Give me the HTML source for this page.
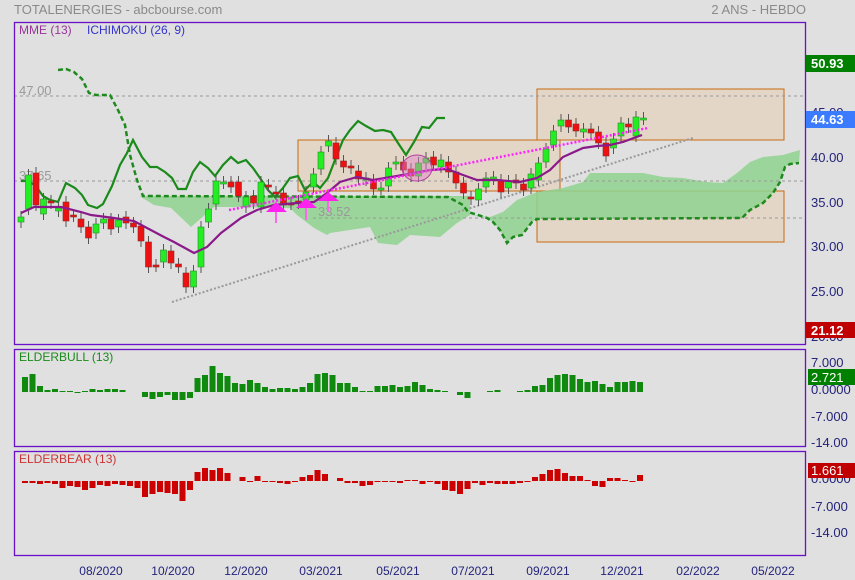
<!DOCTYPE html>
<html><head><meta charset="utf-8"><style>
html,body{margin:0;padding:0;background:#e0e0e0;width:855px;height:580px;overflow:hidden}
svg{display:block;font-family:"Liberation Sans",sans-serif}
</style></head><body>
<svg id="s" width="855" height="580" xmlns="http://www.w3.org/2000/svg">
<rect width="855" height="580" fill="#e0e0e0"/>
<text x="14" y="14" font-size="13" fill="#8a8a8a">TOTALENERGIES - abcbourse.com</text>
<text x="806" y="14" font-size="13" fill="#8a8a8a" text-anchor="end">2 ANS - HEBDO</text>

<rect x="298" y="140" width="262" height="51" fill="#e3d6c6" stroke="#c86a10" stroke-width="1"/>
<rect x="537" y="89" width="247" height="51" fill="#e3d6c6" stroke="#c86a10" stroke-width="1"/>
<rect x="537" y="191" width="247" height="51" fill="#e3d6c6" stroke="#c86a10" stroke-width="1"/>

<polygon fill="#8fd28f" fill-opacity="0.85" points="140,196 470,196 470,215 457,223 440,237 410,235 397,245 378,243 370,227 350,230 330,233 327,235 314,228 297,215 290,208 231,207 214,207 191,227 171,208 154,205 141,197"/>
<polygon fill="#8fd28f" fill-opacity="0.85" points="470,215 490,217 503,212 517,200 537,192 563,188 583,182 590,173 617,173 643,173 663,177 683,178 707,182 723,183 737,173 750,162 763,157 783,155 800,150 799,163 790,164 785,167 780,182 773,193 763,203 750,210 742,218 537,219 532,222 522,235 513,237 507,243 500,230 493,222 487,218 478,215"/>

<line x1="14" y1="96" x2="806" y2="96" stroke="#999" stroke-dasharray="3,3"/>
<line x1="14" y1="181" x2="806" y2="181" stroke="#999" stroke-dasharray="3,3"/>
<line x1="313" y1="218" x2="806" y2="218" stroke="#999" stroke-dasharray="3,3"/>
<text x="19" y="95" font-size="13" fill="#999">47.00</text>
<text x="19" y="180" font-size="13" fill="#999">37.65</text>
<text x="318" y="216" font-size="13" fill="#999">33.52</text>

<line x1="172" y1="302" x2="693" y2="138" stroke="#999" stroke-width="2" stroke-dasharray="2,2"/>

<polyline fill="none" stroke="#1e8a1e" stroke-width="2.5" stroke-dasharray="5,3" points="58,70 66,69 74,72 82,79 89,93 96,95 110,95 118,110 125,125 130,155 137,180 143,196 448,197 463,205 468,212 478,215 487,218 493,222 500,230 507,243 513,237 522,235 532,222 537,219 742,218 750,210 763,203 773,193 780,182 785,167 790,164 799,163"/>
<polyline fill="none" stroke="#1a8a1a" stroke-width="2.2" points="21,181 27,181 35,185 43,196 50,200 58,202 66,183 75,188 82,195 88,205 97,208 103,204 112,186 120,165 127,153 133,140 142,157 150,167 157,167 165,172 172,178 178,189 186,189 193,172 200,162 208,168 215,176 223,165 231,157 238,163 246,160 253,168 260,178 268,190 275,197 283,188 290,178 298,176 305,190 313,182 320,188 328,178 335,160 343,140 350,130 358,121 366,126 375,131 383,130 391,132 398,143 406,155 414,142 422,127 429,128 437,118 445,118"/>

<g id="candles"></g>

<polyline fill="none" stroke="#8a1a8a" stroke-width="2.2" points="21,213 34,207 61,207 81,212 91,215 114,218 134,221 147,228 164,237 174,242 194,253 207,247 221,233 241,218 257,210 274,205 297,203 314,202 327,193 340,182 357,177 373,180 397,176 430,170 447,169 463,175 477,180 497,180 520,182 537,178 550,170 563,157 583,148 597,146 610,145 623,142 642,135"/>
<line x1="229" y1="210" x2="648" y2="128" stroke="#ff22ff" stroke-width="2.5" stroke-dasharray="2,2"/>
<ellipse cx="417" cy="168" rx="15" ry="13" fill="#e080c8" fill-opacity="0.45" stroke="#b040a0"/>

<g fill="#ff22ee">
<rect x="275" y="210" width="2" height="13" fill="#ff66ee"/>
<polygon points="276,202 266,212 287,212"/>
<rect x="305" y="206" width="2" height="14" fill="#ff66ee"/>
<polygon points="306,198 296,208 317,208"/>
<rect x="327" y="199" width="2" height="13" fill="#ff66ee"/>
<polygon points="328,192 318,201 339,201"/>
</g>

<rect x="14.5" y="22.5" width="791" height="322" fill="none" stroke="#6a10c8" stroke-width="1.3"/>
<text x="19" y="34" font-size="12" fill="#993399">MME (13)</text>
<text x="87" y="34" font-size="12" fill="#3333cc">ICHIMOKU (26, 9)</text>

<g font-size="13" fill="#23237a">
<text x="811" y="117">45.00</text>
<text x="811" y="162">40.00</text>
<text x="811" y="207">35.00</text>
<text x="811" y="251">30.00</text>
<text x="811" y="296">25.00</text>
<text x="811" y="341">20.00</text>
</g>
<rect x="806" y="55" width="49" height="17" fill="#008000"/>
<text x="811" y="68" font-size="13" font-weight="bold" fill="#fff">50.93</text>
<rect x="806" y="111" width="49" height="17" fill="#3a7bff"/>
<text x="811" y="124" font-size="13" font-weight="bold" fill="#fff">44.63</text>
<rect x="806" y="322" width="49" height="16" fill="#c00000"/>
<text x="811" y="335" font-size="13" font-weight="bold" fill="#fff">21.12</text>

<g id="bull"></g>
<rect x="14.5" y="349.5" width="791" height="97" fill="none" stroke="#6a10c8" stroke-width="1.3"/>
<text x="19" y="361" font-size="12" fill="#1a8a1a">ELDERBULL (13)</text>
<g font-size="13" fill="#23237a">
<text x="811" y="367">7.000</text>
<text x="811" y="394">0.0000</text>
<text x="811" y="421">-7.000</text>
<text x="811" y="447">-14.00</text>
</g>
<rect x="808" y="369" width="47" height="16" fill="#008000"/>
<text x="811" y="382" font-size="13" fill="#fff">2.721</text>

<g id="bear"></g>
<rect x="14.5" y="451.5" width="791" height="104" fill="none" stroke="#6a10c8" stroke-width="1.3"/>
<text x="19" y="463" font-size="12" fill="#cc3333">ELDERBEAR (13)</text>
<g font-size="13" fill="#23237a">
<text x="811" y="483">0.0000</text>
<text x="811" y="511">-7.000</text>
<text x="811" y="537">-14.00</text>
</g>
<rect x="808" y="463" width="47" height="15" fill="#c00000"/>
<text x="811" y="475" font-size="13" fill="#fff">1.661</text>

<g font-size="12" fill="#23237a" text-anchor="middle">
<text x="101" y="575">08/2020</text>
<text x="173" y="575">10/2020</text>
<text x="246" y="575">12/2020</text>
<text x="321" y="575">03/2021</text>
<text x="398" y="575">05/2021</text>
<text x="473" y="575">07/2021</text>
<text x="548" y="575">09/2021</text>
<text x="622" y="575">12/2021</text>
<text x="698" y="575">02/2022</text>
<text x="773" y="575">05/2022</text>
</g>
</svg>
<script>
var NS="http://www.w3.org/2000/svg";
function el(p,t,a){var e=document.createElementNS(NS,t);for(var k in a)e.setAttribute(k,a[k]);p.appendChild(e);return e;}
var C=[[222,217],[209,175],[173,205],[214,199],[201,203],[211,208],[202,221],[215,216],[219,227],[227,238],[233,224],[223,219],[219,229],[227,220],[217,223],[223,227],[226,241],[242,267],[265,266],[262,250],[251,263],[264,267],[273,287],[287,271],[267,227],[222,209],[204,181],[183,182],[182,187],[182,196],[207,197],[196,203],[207,182],[185,186],[192,194],[193,205],[203,204],[201,203],[200,192],[187,174],[169,152],[146,141],[143,159],[161,167],[166,168],[171,179],[180,178],[180,189],[189,188],[186,168],[164,162],[162,170],[169,176],[176,163],[163,158],[157,165],[167,160],[162,172],[172,183],[183,193],[197,199],[200,189],[187,178],[179,177],[180,192],[188,181],[180,183],[184,190],[188,174],[180,163],[162,149],[145,131],[126,120],[120,127],[124,131],[132,129],[129,133],[132,143],[143,156],[148,139],[136,123],[124,127],[136,117],[119,118]];
var g=document.getElementById("candles");
C.forEach(function(c,i){var x=21+7.5*i,o=c[0],cl=c[1],t=Math.min(o,cl),b=Math.max(o,cl);
el(g,"line",{x1:x,y1:t-6,x2:x,y2:b+6,stroke:"#555","stroke-width":1});
var up=cl<o;el(g,"rect",{x:x-3,y:t,width:6,height:Math.max(b-t,2),fill:up?"#22ee22":"#ee1111",stroke:up?"#2a8a2a":"#8a2a2a","stroke-width":0.6});});
var B=[15,18,6,2,3,1,1,-1,1,3,2,3,3,2,0,0,-5,-7,-5,-3,-8,-8,-6,14,17,26,19,16,9,8,12,9,5,3,4,4,3,5,9,18,19,17,9,9,5,1,1,6,6,7,5,6,10,7,3,2,1,0,-3,-6,0,0,1,2,0,0,1,2,6,7,14,17,18,17,13,10,11,8,5,10,10,11,10];
var R=[-2,-2,-3,-2,-3,-7,-5,-6,-9,-7,-4,-5,-3,-4,-5,-7,-16,-13,-11,-12,-13,-20,-9,9,13,11,13,8,0,4,-1,5,-1,-1,-2,-3,-1,4,6,11,7,0,3,-2,-2,-5,-4,-1,-1,-1,-2,1,1,-3,-1,-3,-9,-10,-13,-8,-2,-4,-2,-3,-3,-3,-2,-1,4,7,11,12,8,5,5,1,-5,-6,3,3,1,-1,6];
function bars(id,arr,z,col){var g=document.getElementById(id);arr.forEach(function(v,i){if(v==0)return;var x=22+7.5*i;
var h=Math.abs(v);el(g,"rect",{x:x,y:v>0?z-h:z,width:6,height:h,fill:col});});}
bars("bull",B,392,"#0f8a0f");bars("bear",R,481,"#cc0000");
</script>
</body></html>
